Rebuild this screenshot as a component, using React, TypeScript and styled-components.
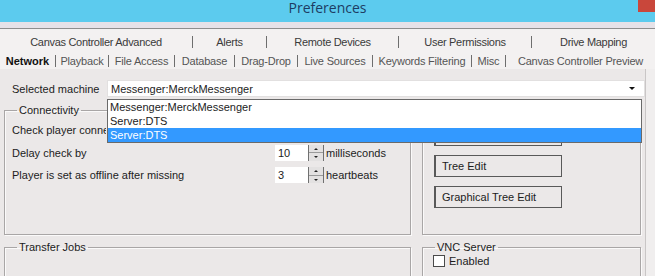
import styled, { createGlobalStyle } from 'styled-components';

const GlobalStyle = createGlobalStyle`
  html, body { margin: 0; padding: 0; background: #ebe8e8; }
  body {
    font-family: 'Liberation Sans', Arial, sans-serif;
    font-size: 11px;
    color: #1c1c1c;
  }
  * { box-sizing: border-box; }
`;

const TOP_TABS = [
  { label: 'Canvas Controller Advanced', width: 193 },
  { label: 'Alerts', width: 74 },
  { label: 'Remote Devices', width: 132 },
  { label: 'User Permissions', width: 133 },
  { label: 'Drive Mapping', width: 0 },
];

const SUB_TABS = [
  { label: 'Network', width: 56, active: true },
  { label: 'Playback', width: 53 },
  { label: 'File Access', width: 66 },
  { label: 'Database', width: 60 },
  { label: 'Drag-Drop', width: 63 },
  { label: 'Live Sources', width: 75 },
  { label: 'Keywords Filtering', width: 99 },
  { label: 'Misc', width: 34 },
  { label: 'Canvas Controller Preview', width: 0 },
];

const MACHINES = ['Messenger:MerckMessenger', 'Server:DTS', 'Server:DTS'];

const Spin = ({ value, unit }: { value: string; unit: string }) => (
  <SpinWrap>
    <SpinInput>{value}</SpinInput>
    <SpinButtons>
      <SpinHalf>
        <Arrow $up />
      </SpinHalf>
      <SpinHalf>
        <Arrow />
      </SpinHalf>
    </SpinButtons>
    <Unit>{unit}</Unit>
  </SpinWrap>
);

export default function App() {
  return (
    <Window>
      <GlobalStyle />
      <TitleBar>
        <span />
        <Title>Preferences</Title>
        <CloseBox />
      </TitleBar>
      <FrameBand />
      <TabStrip>
        <TabRow>
          {TOP_TABS.map((tab, i) => (
            <TopTabCell key={tab.label} $width={tab.width}>
              <TabText>{tab.label}</TabText>
              {i < TOP_TABS.length - 1 && <Sep />}
            </TopTabCell>
          ))}
        </TabRow>
        <SubTabRow>
          {SUB_TABS.map((tab, i) => (
            <TopTabCell key={tab.label} $width={tab.width}>
              <SubTabText $active={!!tab.active}>{tab.label}</SubTabText>
              {i < SUB_TABS.length - 1 && <Sep />}
            </TopTabCell>
          ))}
        </SubTabRow>
      </TabStrip>
      <Body>
        <Page>
          <MachineRow>
            <MachineLabel>Selected machine</MachineLabel>
            <ComboWrap>
              <Combo>
                <span>Messenger:MerckMessenger</span>
                <ComboArrow />
              </Combo>
              <DropList>
                {MACHINES.map((m, i) => (
                  <DropItem key={i} $selected={i === 2}>
                    {m}
                  </DropItem>
                ))}
              </DropList>
            </ComboWrap>
          </MachineRow>
          <GroupGrid>
            <Group>
              <Legend>Connectivity</Legend>
              <GroupRows>
                <FieldRow>
                  {/* the open drop list hides the rest of this row */}
                  <FieldLabel $clip>Check player connection every</FieldLabel>
                </FieldRow>
                <FieldRow>
                  <FieldLabel>Delay check by</FieldLabel>
                  <Spin value="10" unit="milliseconds" />
                </FieldRow>
                <FieldRow>
                  <FieldLabel>Player is set as offline after missing</FieldLabel>
                  <Spin value="3" unit="heartbeats" />
                </FieldRow>
              </GroupRows>
            </Group>
            <Group>
              <Legend>Editors</Legend>
              <ButtonStack>
                <EditButton>Schedule Edit</EditButton>
                <EditButton>Tree Edit</EditButton>
                <EditButton>Graphical Tree Edit</EditButton>
              </ButtonStack>
            </Group>
            <Group>
              <Legend>Transfer Jobs</Legend>
            </Group>
            <Group>
              <Legend>VNC Server</Legend>
              <CheckRow>
                <CheckBox />
                <span>Enabled</span>
              </CheckRow>
            </Group>
          </GroupGrid>
        </Page>
      </Body>
    </Window>
  );
}

const Window = styled.div`
  width: 655px;
  height: 276px;
  overflow: hidden;
  display: flex;
  flex-direction: column;
  background: #ebe8e8;
`;

const TitleBar = styled.div`
  height: 22px;
  flex: none;
  display: grid;
  grid-template-columns: 1fr auto 1fr;
  background: #5ccbee;
`;

const Title = styled.div`
  font-family: 'Open Sans', 'Noto Sans', sans-serif;
  font-size: 14px;
  line-height: 14px;
  color: #1d3c63;
  margin-top: 1px;
`;

const CloseBox = styled.div`
  justify-self: end;
  width: 17px;
  height: 12px;
  background: #c9473b;
`;

const FrameBand = styled.div`
  height: 7px;
  flex: none;
  background: #e6e2e8;
  border-bottom: 1px solid #8e8e8e;
`;

const TabStrip = styled.div`
  flex: none;
  background: #f3f1f1;
  padding-top: 4px;
`;

const TabRow = styled.div`
  display: flex;
  align-items: center;
  height: 17px;
`;

const SubTabRow = styled(TabRow)`
  margin-top: 2px;
  height: 17px;
`;

const TopTabCell = styled.div<{ $width: number }>`
  display: flex;
  align-items: center;
  flex: ${(p) => (p.$width ? `0 0 ${p.$width}px` : '1 0 auto')};
  white-space: nowrap;
`;

const TabText = styled.span`
  flex: 1;
  text-align: center;
  color: #3a3a3a;
  letter-spacing: -0.3px;
`;

const SubTabText = styled(TabText)<{ $active: boolean }>`
  color: ${(p) => (p.$active ? '#111' : '#555')};
  font-weight: ${(p) => (p.$active ? 700 : 400)};
  letter-spacing: ${(p) => (p.$active ? '0px' : '-0.2px')};
`;

const Sep = styled.span`
  flex: none;
  width: 1px;
  height: 12px;
  background: #6e6e6e;
`;

const Body = styled.div`
  flex: 1;
  display: flex;
  background: #f0eeee;
`;

const Page = styled.div`
  width: 646px;
  background: #ebe8e8;
  border-right: 1px solid #c9c6c6;
  padding: 11px 0 0 4px;
`;

const MachineRow = styled.div`
  display: flex;
  align-items: center;
  height: 17px;
`;

const MachineLabel = styled.div`
  width: 103px;
  padding-left: 8px;
`;

const ComboWrap = styled.div`
  position: relative;
  width: 538px;
  height: 17px;
`;

const Combo = styled.div`
  height: 17px;
  background: #fff;
  border: 1px solid #e2e0e0;
  display: flex;
  align-items: center;
  justify-content: space-between;
  padding: 0 9px 0 3px;
`;

const ComboArrow = styled.span`
  width: 0;
  height: 0;
  border-left: 3px solid transparent;
  border-right: 3px solid transparent;
  border-top: 3px solid #111;
`;

const DropList = styled.div`
  position: absolute;
  top: 19px;
  left: 0;
  width: 535px;
  background: #fff;
  border: 1px solid #6a6a6a;
  z-index: 2;
`;

const DropItem = styled.div<{ $selected: boolean }>`
  height: 14px;
  line-height: 14px;
  padding-left: 2px;
  background: ${(p) => (p.$selected ? '#3399ff' : '#fff')};
  color: ${(p) => (p.$selected ? '#fff' : '#1c1c1c')};
`;

const GroupGrid = styled.div`
  display: grid;
  grid-template-columns: 407px 219px;
  grid-template-rows: 131px 60px;
  column-gap: 11px;
  row-gap: 6px;
  margin-top: 7px;
`;

const Group = styled.fieldset`
  margin: 0;
  padding: 0 7px;
  min-width: 0;
  border: 1px solid #a9a6a6;
  box-shadow: inset 1px 1px 0 #fbfafa, 1px 1px 0 #fbfafa;
`;

const Legend = styled.legend`
  padding: 0 2px;
  margin-left: 5px;
  line-height: 13px;
`;

const GroupRows = styled.div`
  display: flex;
  flex-direction: column;
  padding-top: 2px;
`;

const FieldRow = styled.div`
  display: flex;
  align-items: center;
  height: 22.5px;
`;

const FieldLabel = styled.div<{ $clip?: boolean }>`
  width: ${(p) => (p.$clip ? '94px' : '263px')};
  white-space: nowrap;
  overflow: hidden;
`;

const SpinWrap = styled.div`
  display: flex;
  align-items: center;
`;

const SpinInput = styled.div`
  width: 33px;
  height: 16px;
  line-height: 16px;
  padding-left: 3px;
  background: #fff;
`;

const SpinButtons = styled.div`
  display: flex;
  flex-direction: column;
  width: 16px;
  height: 16px;
  border-left: 1px solid #707070;
  border-right: 1px solid #707070;
  background: #e3e1e1;
`;

const SpinHalf = styled.div`
  flex: 1;
  display: flex;
  align-items: center;
  justify-content: center;
  & + & {
    border-top: 1px solid #9a9a9a;
  }
`;

const Arrow = styled.span<{ $up?: boolean }>`
  width: 0;
  height: 0;
  border-left: 2px solid transparent;
  border-right: 2px solid transparent;
  ${(p) => (p.$up ? 'border-bottom: 2px solid #222;' : 'border-top: 2px solid #222;')}
`;

const Unit = styled.span`
  margin-left: 2px;
`;

const ButtonStack = styled.div`
  display: flex;
  flex-direction: column;
  gap: 9px;
  padding: 7px 0 0 4px;
`;

const EditButton = styled.div`
  width: 128px;
  height: 22px;
  line-height: 20px;
  padding-left: 6px;
  border: 1px solid #595959;
  border-left-width: 2px;
  background: #ebe8e8;
`;

const CheckRow = styled.div`
  display: flex;
  align-items: center;
  gap: 4px;
  padding: 1px 0 0 3px;
`;

const CheckBox = styled.span`
  width: 12px;
  height: 12px;
  background: #fff;
  border: 1px solid #4a4a4a;
`;
